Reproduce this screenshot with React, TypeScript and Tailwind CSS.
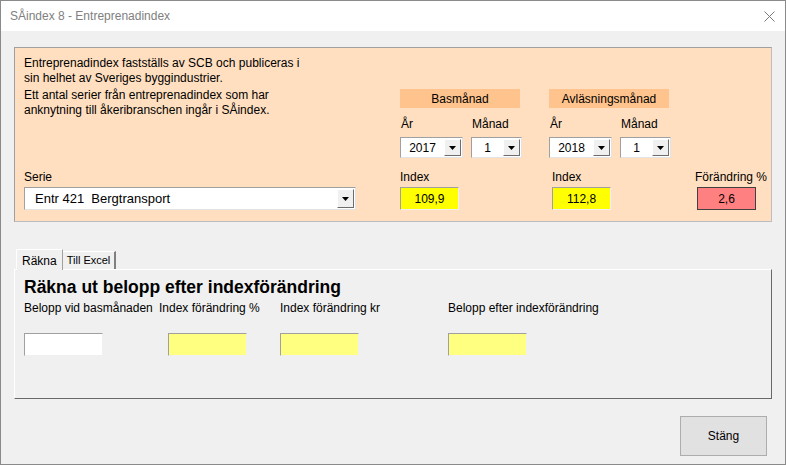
import React from 'react'

const font = { fontFamily: '"Liberation Sans", Arial, sans-serif' }

function Arrow() {
  return (
    <svg width="7" height="4" viewBox="0 0 7 4">
      <path d="M0 0h7L3.5 4z" fill="#000" />
    </svg>
  )
}

function Combo({ value, width, align = 'center' }: { value: string; width: string; align?: 'center' | 'left' }) {
  return (
    <div className={`${width} h-full flex bg-white border border-t-[#a0a0a0] border-l-[#a0a0a0] border-b-[#e3e3e3] border-r-[#e3e3e3]`}>
      <div className={`flex-1 flex items-center whitespace-pre ${align === 'left' ? 'pl-[10px] justify-start' : 'justify-center'}`}>{value}</div>
      <div className="w-[17px] my-[1px] mr-[1px] flex items-center justify-center bg-[#f0f0f0] border border-t-white border-l-white border-b-[#6d6d6d] border-r-[#6d6d6d]">
        <Arrow />
      </div>
    </div>
  )
}

function Field({ value, bg, width }: { value?: string; bg: string; width: string }) {
  return (
    <div className={`${width} h-[23px] ${bg} flex items-center justify-center border border-t-[#a0a0a0] border-l-[#a0a0a0] border-b-[#f0f0f0] border-r-[#f0f0f0]`}>
      {value}
    </div>
  )
}

function PeriodGroup({ title, year }: { title: string; year: string }) {
  return (
    <div className="flex flex-col w-[122px]">
      <div className="h-[19px] w-[120px] bg-[#ffc48d] flex items-center justify-center">{title}</div>
      <div className="mt-[10px] h-[13px] flex leading-[13px]">
        <span className="w-[72px] pl-[1px]">År</span>
        <span>Månad</span>
      </div>
      <div className="mt-[6px] h-[21px] flex gap-[8px]">
        <Combo value={year} width="w-[63px]" />
        <Combo value="1" width="w-[51px]" />
      </div>
    </div>
  )
}

export default function App() {
  return (
    <div
      className="w-[786px] h-[465px] bg-[#f0f0f0] border border-[#8a8a8a] flex flex-col text-[12px] text-black overflow-hidden whitespace-nowrap"
      style={font}
    >
      {/* Title bar */}
      <div className="h-[30px] bg-white flex items-center justify-between pl-[9px] pr-[9px] shrink-0">
        <span className="text-[#808080] text-[12px]">SÅindex 8 - Entreprenadindex</span>
        <svg width="11" height="11" viewBox="0 0 11 11" className="mr-[1px]">
          <path d="M0.5 0.5l10 10M10.5 0.5l-10 10" stroke="#7a7a7a" strokeWidth="1" />
        </svg>
      </div>

      <div className="flex flex-col px-[13px] pt-[16px]">
        {/* Peach panel */}
        <div className="h-[175px] bg-[#ffdfc0] border border-t-[#a0a0a0] border-l-[#a0a0a0] border-b-[#bdbdbd] border-r-[#bdbdbd] flex pl-[9px] pb-[11px]">
          <div className="w-[333px] flex flex-col justify-between pt-[8px]">
            <div className="leading-[15px]">
              <p>Entreprenadindex fastställs av SCB och publiceras i<br />sin helhet av Sveriges byggindustrier.</p>
              <p className="mt-[2px]">Ett antal serier från entreprenadindex som har<br />anknytning till åkeribranschen ingår i SÅindex.</p>
            </div>
            <div className="flex flex-col">
              <span className="leading-[13px]">Serie</span>
              <div className="mt-[3px] h-[23px] text-[13px]">
                <Combo value="Entr 421  Bergtransport" width="w-[332px]" align="left" />
              </div>
            </div>
          </div>

          <div className="ml-[43px] flex flex-col justify-end">
            <div className="flex gap-[27px]">
              <PeriodGroup title="Basmånad" year="2017" />
              <PeriodGroup title="Avläsningsmånad" year="2018" />
            </div>
            <div className="mt-[13px] flex">
              <div className="w-[152px] flex flex-col">
                <span className="leading-[13px]">Index</span>
                <div className="mt-[3px]"><Field value="109,9" bg="bg-[#ffff00]" width="w-[59px]" /></div>
              </div>
              <div className="w-[143px] flex flex-col">
                <span className="leading-[13px]">Index</span>
                <div className="mt-[3px]"><Field value="112,8" bg="bg-[#ffff00]" width="w-[59px]" /></div>
              </div>
              <div className="flex flex-col">
                <span className="leading-[13px]">Förändring %</span>
                <div className="mt-[3px] ml-[2px] w-[59px] h-[23px] bg-[#ff8080] border border-[#404040] flex items-center justify-center">2,6</div>
              </div>
            </div>
          </div>
        </div>

        {/* Tabs */}
        <div className="mt-[26px] flex items-end h-[21px] pl-[2px]">
          <div className="h-[21px] px-[5px] flex items-start pt-[2px] bg-[#f0f0f0] border-t border-l border-white border-r border-r-[#a0a0a0] relative z-10 -mb-[1px] text-[12px]">
            Räkna
          </div>
          <div className="h-[18px] px-[4px] flex items-center bg-[#f0f0f0] border-t border-white border-r-2 border-r-[#808080] text-[11px]">
            Till Excel
          </div>
        </div>
        <div className="h-[130px] border border-t-white border-l-white border-b-[#696969] border-r-[#696969] flex flex-col pl-[9px]">
          <h1 className="mt-[7px] text-[17.5px] font-bold leading-[20px]">Räkna ut belopp efter indexförändring</h1>
          <div className="mt-[5px] flex leading-[13px]">
            <div className="w-[135px] flex flex-col">
              <span>Belopp vid basmånaden</span>
              <div className="mt-[18px]"><Field bg="bg-white" width="w-[79px]" /></div>
            </div>
            <div className="w-[121px] flex flex-col">
              <span>Index förändring %</span>
              <div className="mt-[18px] ml-[9px]"><Field bg="bg-[#ffff80]" width="w-[79px]" /></div>
            </div>
            <div className="w-[168px] flex flex-col">
              <span>Index förändring kr</span>
              <div className="mt-[18px]"><Field bg="bg-[#ffff80]" width="w-[79px]" /></div>
            </div>
            <div className="flex flex-col">
              <span>Belopp efter indexförändring</span>
              <div className="mt-[18px]"><Field bg="bg-[#ffff80]" width="w-[79px]" /></div>
            </div>
          </div>
        </div>

        {/* Button */}
        <div className="mt-[17px] flex justify-end pr-[5px]">
          <button className="w-[87px] h-[40px] bg-[#e1e1e1] border border-[#adadad] text-[12px]" style={font}>
            Stäng
          </button>
        </div>
      </div>
    </div>
  )
}
